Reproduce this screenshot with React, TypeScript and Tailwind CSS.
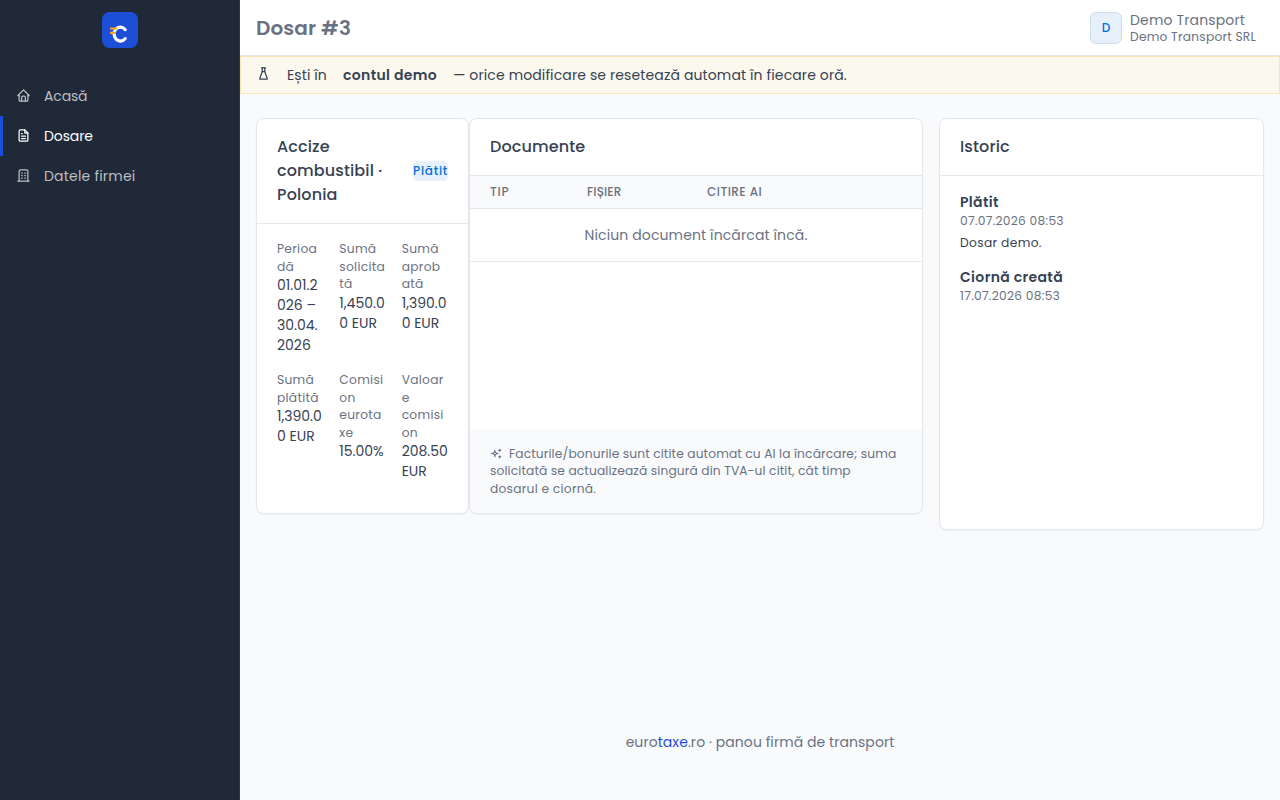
import { TbBuilding, TbFileText, TbFlask, TbHome, TbSparkles } from 'react-icons/tb';

const navItems = [
  { label: 'Acasă', icon: TbHome, active: false, tracking: 'tracking-[-0.15px]' },
  { label: 'Dosare', icon: TbFileText, active: true, tracking: 'tracking-[-0.1px]' },
  { label: 'Datele firmei', icon: TbBuilding, active: false, tracking: 'tracking-[0.2px]' },
];

const details = [
  { label: ['Perioa', 'dă'], value: ['01.01.2', '026 –', '30.04.', '2026'] },
  { label: ['Sumă', 'solicita', 'tă'], value: ['1,450.0', '0 EUR'] },
  { label: ['Sumă', 'aprob', 'ată'], value: ['1,390.0', '0 EUR'] },
  { label: ['Sumă', 'plătită'], value: ['1,390.0', '0 EUR'] },
  { label: ['Comisi', 'on', 'eurota', 'xe'], value: ['15.00%'] },
  { label: ['Valoar', 'e', 'comisi', 'on'], value: ['208.50', 'EUR'] },
];

const history = [
  { title: 'Plătit', date: '07.07.2026 08:53', note: 'Dosar demo.' },
  { title: 'Ciornă creată', date: '17.07.2026 08:53' },
];

const Logo = () => (
  <svg width="36" height="36" viewBox="0 0 36 36">
    <rect width="36" height="36" rx="7.5" fill="#1d4ed8" />
    <path
      d="M23.2 17.6A6.3 7 0 1 0 23.2 26.6"
      fill="none"
      stroke="#fff"
      strokeWidth="3.2"
      strokeLinecap="round"
    />
    <path d="M8 15.4h8l-.8 2.2H8zM8 19.7h6.2l-.6 2.2H8z" fill="#f9a825" />
  </svg>
);

const Sidebar = () => (
  <aside className="flex w-60 shrink-0 flex-col border-r border-[#2f3947] bg-[#1f2937]">
    <div className="flex justify-center pt-3 pb-7">
      <Logo />
    </div>
    <nav>
      {navItems.map(({ label, icon: Icon, active, tracking }) => (
        <div
          key={label}
          className={`flex h-10 items-center border-l-[3px] pl-[13px] ${
            active ? 'border-[#1d4ed8] text-white' : 'border-transparent text-[#bcbfc3]'
          }`}
        >
          <Icon size={15} className="mr-[13px] mb-px" />
          <span className={tracking}>{label}</span>
        </div>
      ))}
    </nav>
  </aside>
);

const Header = () => (
  <header className="flex h-14 items-center justify-between border-b border-gray-200 bg-white pr-6 pl-4">
    <h1 className="text-xl leading-7 font-semibold tracking-[0.12px] text-gray-500">Dosar #3</h1>
    <div className="flex items-center gap-2">
      <span className="flex size-8 items-center justify-center rounded-[6px] border border-[#cddbeb] bg-[#e6f0fb] text-xs font-medium text-[#0071d9]">
        D
      </span>
      <div className="w-[126px] pt-[3px] whitespace-nowrap text-gray-500">
        <div className="leading-4 tracking-[0.15px]">Demo Transport</div>
        <div className="text-[12.25px] leading-[17.5px] tracking-[0.22px]">Demo Transport SRL</div>
      </div>
    </div>
  </header>
);

const DemoBanner = () => (
  <div className="flex h-[38px] items-center gap-4 border border-[#fae5b8] bg-[#fbf8ee] px-[15px]">
    <TbFlask size={15} className="mb-1" />
    <span className="w-10 tracking-[0.1px] whitespace-nowrap">Ești în</span>
    <strong className="w-[94px] font-semibold tracking-[0.35px] whitespace-nowrap">contul demo</strong>
    <span className="tracking-[0.12px] whitespace-nowrap">
      — orice modificare se resetează automat în fiecare oră.
    </span>
  </div>
);

const CardTitle = ({ children }: { children: React.ReactNode }) => (
  <h3 className="text-base leading-6 font-medium tracking-[0.12px]">{children}</h3>
);

const SummaryCard = () => (
  <section className="flex h-[396px] w-[213px] shrink-0 flex-col rounded-[8px] border border-gray-200 bg-white shadow-xs">
    <div className="flex items-center justify-between border-b border-gray-200 px-5 py-4">
      <CardTitle>
        Accize
        <br />
        combustibil ·
        <br />
        Polonia
      </CardTitle>
      <span className="flex h-5 w-[35px] items-center rounded-[5px] bg-[#e6f0fb] text-xs font-medium tracking-[0.75px] text-[#0071d9]">
        Plătit
      </span>
    </div>
    <div className="grid grid-cols-3 gap-4 px-5 py-4">
      {details.map((item) => (
        <div key={item.label.join('')} className="whitespace-nowrap">
          {item.label.map((line) => (
            <div key={line} className="text-[12.25px] leading-[17.5px] tracking-[0.28px] text-gray-500">
              {line}
            </div>
          ))}
          {item.value.map((line) => (
            <div key={line}>{line}</div>
          ))}
        </div>
      ))}
    </div>
  </section>
);

const DocumentsCard = () => (
  <section className="flex h-[396px] w-[454px] shrink-0 flex-col overflow-hidden rounded-[8px] border border-gray-200 bg-white shadow-xs">
    <div className="border-b border-gray-200 px-5 py-4">
      <CardTitle>Documente</CardTitle>
    </div>
    <div className="flex h-[33px] items-center border-b border-gray-200 bg-[#f9fafc] px-5 text-xs font-medium tracking-[0.04em] text-gray-500">
      <span className="w-[97px] tracking-[0.8px]">TIP</span>
      <span className="w-[120px] tracking-[0.15px]">FIȘIER</span>
      <span>CITIRE AI</span>
    </div>
    <div className="flex h-[53px] items-center justify-center border-b border-gray-200 tracking-[0.12px] text-gray-500">
      Niciun document încărcat încă.
    </div>
    <div className="mt-auto bg-[#f9fafc] px-5 py-4 text-[12.25px] leading-[17.5px] tracking-[0.12px] text-gray-500">
      <div className="flex items-center whitespace-nowrap">
        <TbSparkles size={13} className="mr-1.5" />
        <span>Facturile/bonurile sunt citite automat cu AI la încărcare; suma</span>
      </div>
      <div className="whitespace-nowrap">solicitată se actualizează singură din TVA-ul citit, cât timp</div>
      <div className="tracking-[0.25px]">dosarul e ciornă.</div>
    </div>
  </section>
);

const HistoryCard = () => (
  <section className="ml-4 h-[412px] flex-1 rounded-[8px] border border-gray-200 bg-white shadow-xs">
    <div className="border-b border-gray-200 px-5 py-4">
      <CardTitle>Istoric</CardTitle>
    </div>
    <div className="flex flex-col gap-4 px-5 py-4">
      {history.map((entry) => (
        <div key={entry.title}>
          <div className="font-semibold tracking-[0.35px]">{entry.title}</div>
          <div className="text-[12.25px] leading-[17.5px] tracking-[0.26px] text-gray-500">{entry.date}</div>
          {entry.note && (
            <div className="mt-1 text-[12.25px] leading-[17.5px] tracking-[0.35px]">{entry.note}</div>
          )}
        </div>
      ))}
    </div>
  </section>
);

const App = () => {
  return (
    <div className="flex h-screen overflow-hidden bg-[#f9fafc] font-[Poppins,Inter,sans-serif] text-sm leading-5 text-gray-700">
      <Sidebar />
      <div className="flex min-w-0 flex-1 flex-col">
        <Header />
        <DemoBanner />
        <main className="flex flex-1 items-start px-4 pt-6">
          <SummaryCard />
          <DocumentsCard />
          <HistoryCard />
        </main>
        <footer className="pb-12 text-center tracking-[0.06px] text-gray-500">
          euro<span className="text-[#1d4ed8]">taxe</span>.ro · panou firmă de transport
        </footer>
      </div>
    </div>
  );
};

export default App;
